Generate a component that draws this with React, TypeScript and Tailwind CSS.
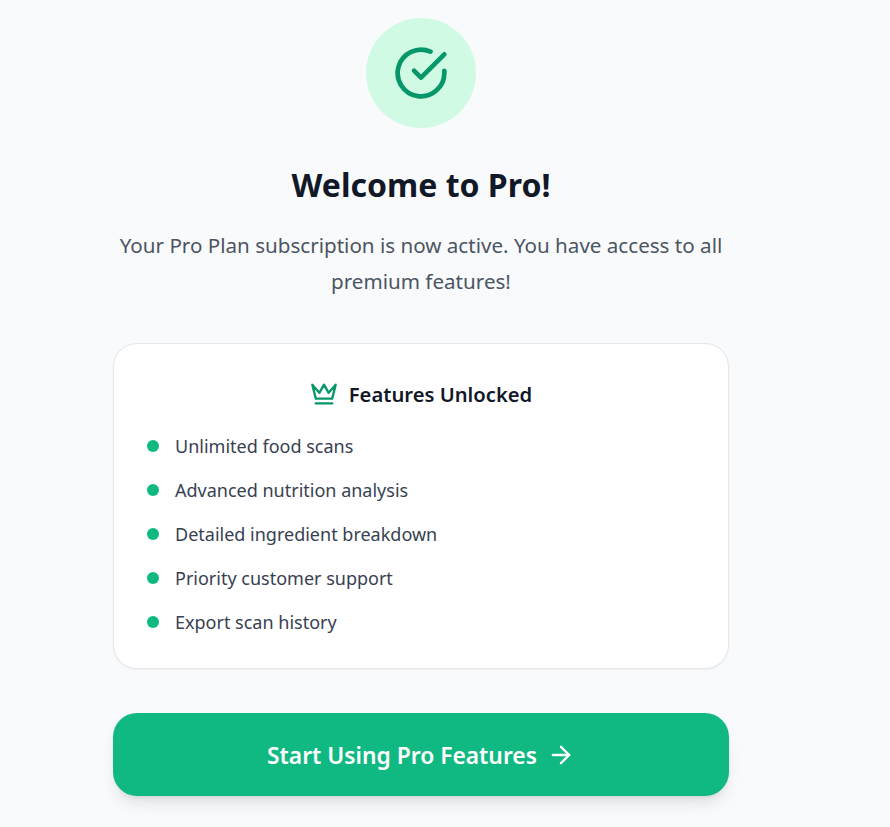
import { ArrowRight } from "lucide-react";

const features = [
  "Unlimited food scans",
  "Advanced nutrition analysis",
  "Detailed ingredient breakdown",
  "Priority customer support",
  "Export scan history",
];

function CheckIcon() {
  return (
    <svg className="h-14 w-14 text-[#059669]" viewBox="0 0 24 24" fill="none" stroke="currentColor" strokeWidth="2" strokeLinecap="round" strokeLinejoin="round">
      <path d="M22 11.08V12a10 10 0 1 1-5.93-9.14" />
      <path d="m9 11 3 3L22 4" />
    </svg>
  );
}

function CrownIcon() {
  return (
    <svg className="h-7 w-7 text-[#059669]" viewBox="0 0 24 24" fill="none" stroke="currentColor" strokeWidth="2" strokeLinecap="round" strokeLinejoin="round">
      <path d="m2 4 3 12h14l3-12-6 7-4-7-4 7-6-7z" />
      <path d="M5 20h14" />
    </svg>
  );
}

export default function App() {
  return (
    <div className="h-[827px] overflow-hidden bg-gray-50 font-['Noto_Sans',sans-serif]">
      <div className="flex w-[842px] flex-col items-center pt-[18px]">
        <div className="flex h-[110px] w-[110px] items-center justify-center rounded-full bg-[#d1fae5]">
          <CheckIcon />
        </div>
        <h1 className="mt-[33px] text-[32px] leading-[48px] font-bold text-[#111827]">Welcome to Pro!</h1>
        <p className="mt-[18px] w-[616px] text-center text-[20.6px] leading-9 text-[#4b5563]">
          Your Pro Plan subscription is now active. You have access to all premium features!
        </p>

        {/* Features card */}
        <div className="mt-[44px] h-[326px] w-[616px] rounded-3xl border border-gray-200 bg-white px-[33px] pt-[33px] shadow-[0_1px_2px_0_rgb(0_0_0/0.05)]">
          <div className="flex items-center justify-center gap-[11px]">
            <CrownIcon />
            <h2 className="text-[20.2px] leading-[34px] font-semibold text-[#111827]">Features Unlocked</h2>
          </div>
          <ul className="mt-[21px] flex flex-col gap-4">
            {features.map((feature) => (
              <li key={feature} className="flex h-7 items-center gap-4">
                <span className="h-3 w-3 rounded-full bg-[#10b981]" />
                <span className="text-lg leading-7 text-[#374151]">{feature}</span>
              </li>
            ))}
          </ul>
        </div>

        <button
          type="button"
          className="mt-[44px] flex h-[83px] w-[616px] items-center justify-center gap-2.5 rounded-3xl bg-[#10b981] text-[22.8px] font-semibold text-white shadow-lg"
        >
          <span className="pt-1">Start Using Pro Features</span>
          <ArrowRight className="h-7 w-7" />
        </button>
      </div>
    </div>
  );
}
